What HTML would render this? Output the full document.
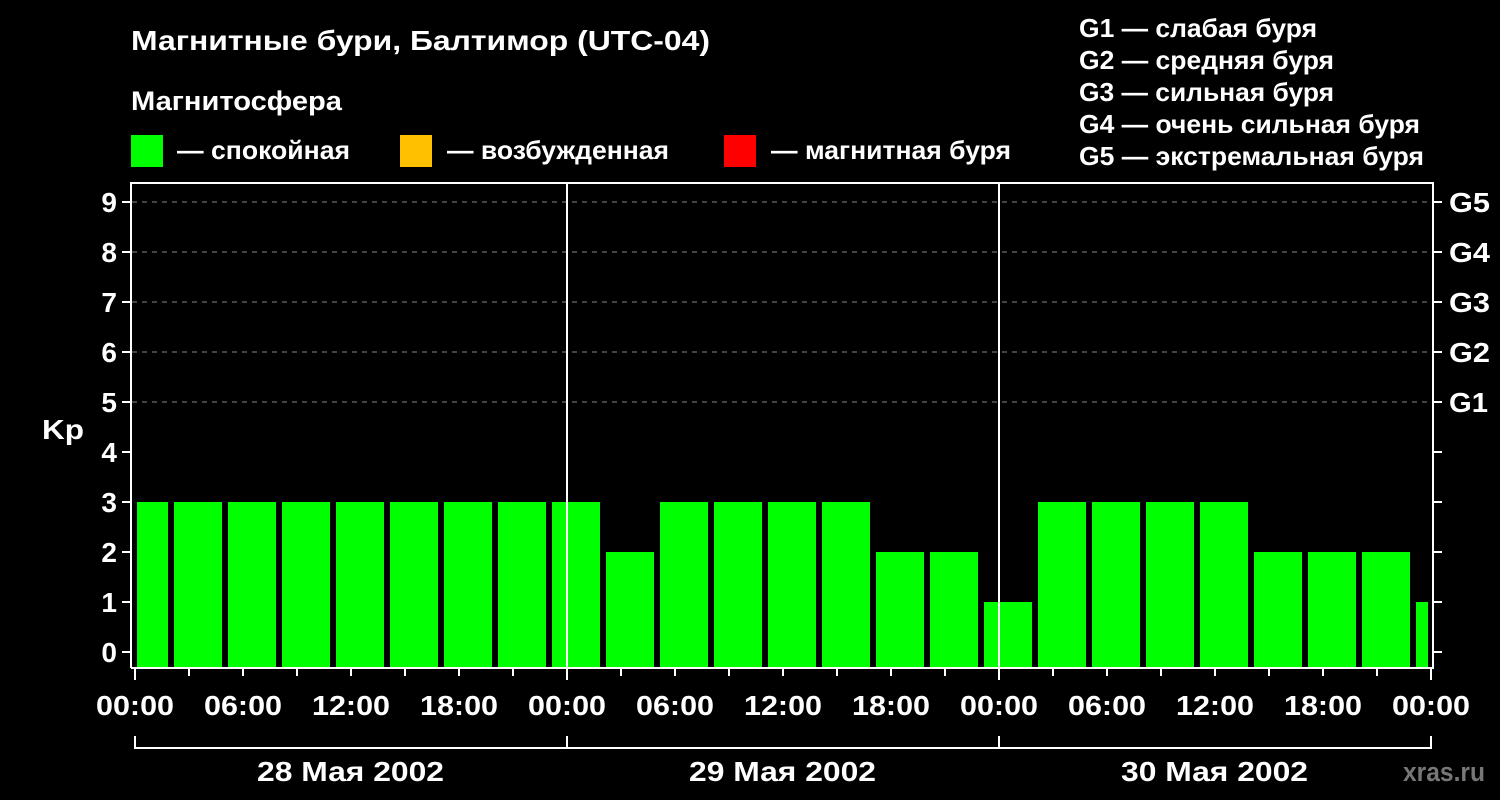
<html><head><style>body{margin:0;background:#000;width:1500px;height:800px;overflow:hidden}text{font-family:"Liberation Sans","DejaVu Sans",sans-serif;font-weight:bold;fill:#fff}</style></head><body>
<svg width="1500" height="800" viewBox="0 0 1500 800" xmlns="http://www.w3.org/2000/svg">
<rect width="1500" height="800" fill="#000"/>
<text x="131" y="50" font-size="28" textLength="579" lengthAdjust="spacingAndGlyphs">Магнитные бури, Балтимор (UTC-04)</text>
<text x="131" y="110" font-size="27" textLength="211" lengthAdjust="spacingAndGlyphs">Магнитосфера</text>
<rect x="131" y="135" width="32" height="32" fill="#00ff00"/><text x="177" y="159" font-size="26" textLength="173" lengthAdjust="spacingAndGlyphs">— спокойная</text>
<rect x="400" y="135" width="32" height="32" fill="#ffc000"/><text x="447" y="159" font-size="26" textLength="222" lengthAdjust="spacingAndGlyphs">— возбужденная</text>
<rect x="724" y="135" width="32" height="32" fill="#ff0000"/><text x="771" y="159" font-size="26" textLength="240" lengthAdjust="spacingAndGlyphs">— магнитная буря</text>
<g font-size="26"><text x="1079" y="37" textLength="238" lengthAdjust="spacingAndGlyphs">G1 — слабая буря</text><text x="1079" y="69" textLength="255" lengthAdjust="spacingAndGlyphs">G2 — средняя буря</text><text x="1079" y="101" textLength="255" lengthAdjust="spacingAndGlyphs">G3 — сильная буря</text><text x="1079" y="133" textLength="341" lengthAdjust="spacingAndGlyphs">G4 — очень сильная буря</text><text x="1079" y="165" textLength="345" lengthAdjust="spacingAndGlyphs">G5 — экстремальная буря</text></g>
<g stroke="#888" stroke-width="1" stroke-dasharray="5,5"><line x1="132" y1="202" x2="1432" y2="202"/><line x1="132" y1="252" x2="1432" y2="252"/><line x1="132" y1="302" x2="1432" y2="302"/><line x1="132" y1="352" x2="1432" y2="352"/><line x1="132" y1="402" x2="1432" y2="402"/></g>
<g fill="#00ff00">
<rect x="137" y="502" width="31" height="166"/>
<rect x="174" y="502" width="48" height="166"/><rect x="228" y="502" width="48" height="166"/><rect x="282" y="502" width="48" height="166"/><rect x="336" y="502" width="48" height="166"/><rect x="390" y="502" width="48" height="166"/><rect x="444" y="502" width="48" height="166"/><rect x="498" y="502" width="48" height="166"/><rect x="552" y="502" width="48" height="166"/>
<rect x="606" y="552" width="48" height="116"/>
<rect x="660" y="502" width="48" height="166"/><rect x="714" y="502" width="48" height="166"/><rect x="768" y="502" width="48" height="166"/><rect x="822" y="502" width="48" height="166"/>
<rect x="876" y="552" width="48" height="116"/><rect x="930" y="552" width="48" height="116"/>
<rect x="984" y="602" width="48" height="66"/>
<rect x="1038" y="502" width="48" height="166"/><rect x="1092" y="502" width="48" height="166"/><rect x="1146" y="502" width="48" height="166"/><rect x="1200" y="502" width="48" height="166"/>
<rect x="1254" y="552" width="48" height="116"/><rect x="1308" y="552" width="48" height="116"/><rect x="1362" y="552" width="48" height="116"/>
<rect x="1416" y="602" width="12" height="66"/>
</g>
<g stroke="#fff" stroke-width="2" fill="none">
<path d="M131 668V183H1433V668H131"/>
<line x1="567" y1="183" x2="567" y2="668"/><line x1="999" y1="183" x2="999" y2="668"/>
<path d="M122 202h9M122 252h9M122 302h9M122 352h9M122 402h9M122 452h9M122 502h9M122 552h9M122 602h9M122 652h9"/>
<path d="M1433 202h9M1433 252h9M1433 302h9M1433 352h9M1433 402h9M1433 452h9M1433 502h9M1433 552h9M1433 602h9M1433 652h9"/>
<path d="M135 668v12M189 668v8M243 668v8M297 668v8M351 668v8M405 668v8M459 668v8M513 668v8M567 668v12M621 668v8M675 668v8M729 668v8M783 668v8M837 668v8M891 668v8M945 668v8M999 668v12M1053 668v8M1107 668v8M1161 668v8M1215 668v8M1269 668v8M1323 668v8M1377 668v8M1431 668v12"/>
<path d="M135 736V748H1431V736M567 736V748M999 736V748"/>
</g>
<g font-size="28" text-anchor="end"><text x="117" y="212">9</text><text x="117" y="262">8</text><text x="117" y="312">7</text><text x="117" y="362">6</text><text x="117" y="412">5</text><text x="117" y="462">4</text><text x="117" y="512">3</text><text x="117" y="562">2</text><text x="117" y="612">1</text><text x="117" y="662">0</text></g>
<text x="42" y="439" font-size="28" textLength="42" lengthAdjust="spacingAndGlyphs">Kp</text>
<g font-size="28"><text x="1449" y="212" textLength="41" lengthAdjust="spacingAndGlyphs">G5</text><text x="1449" y="262" textLength="41" lengthAdjust="spacingAndGlyphs">G4</text><text x="1449" y="312" textLength="41" lengthAdjust="spacingAndGlyphs">G3</text><text x="1449" y="362" textLength="41" lengthAdjust="spacingAndGlyphs">G2</text><text x="1449" y="412" textLength="39" lengthAdjust="spacingAndGlyphs">G1</text></g>
<g font-size="28"><text x="96" y="715" textLength="78" lengthAdjust="spacingAndGlyphs">00:00</text><text x="204" y="715" textLength="78" lengthAdjust="spacingAndGlyphs">06:00</text><text x="312" y="715" textLength="78" lengthAdjust="spacingAndGlyphs">12:00</text><text x="420" y="715" textLength="78" lengthAdjust="spacingAndGlyphs">18:00</text><text x="528" y="715" textLength="78" lengthAdjust="spacingAndGlyphs">00:00</text><text x="636" y="715" textLength="78" lengthAdjust="spacingAndGlyphs">06:00</text><text x="744" y="715" textLength="78" lengthAdjust="spacingAndGlyphs">12:00</text><text x="852" y="715" textLength="78" lengthAdjust="spacingAndGlyphs">18:00</text><text x="960" y="715" textLength="78" lengthAdjust="spacingAndGlyphs">00:00</text><text x="1068" y="715" textLength="78" lengthAdjust="spacingAndGlyphs">06:00</text><text x="1176" y="715" textLength="78" lengthAdjust="spacingAndGlyphs">12:00</text><text x="1284" y="715" textLength="78" lengthAdjust="spacingAndGlyphs">18:00</text><text x="1392" y="715" textLength="78" lengthAdjust="spacingAndGlyphs">00:00</text></g>
<g font-size="28"><text x="257" y="781" textLength="187" lengthAdjust="spacingAndGlyphs">28 Мая 2002</text><text x="689" y="781" textLength="187" lengthAdjust="spacingAndGlyphs">29 Мая 2002</text><text x="1121" y="781" textLength="187" lengthAdjust="spacingAndGlyphs">30 Мая 2002</text></g>
<text x="1403" y="781" font-size="27" textLength="82" lengthAdjust="spacingAndGlyphs" style="fill:#777">xras.ru</text>
</svg></body></html>
